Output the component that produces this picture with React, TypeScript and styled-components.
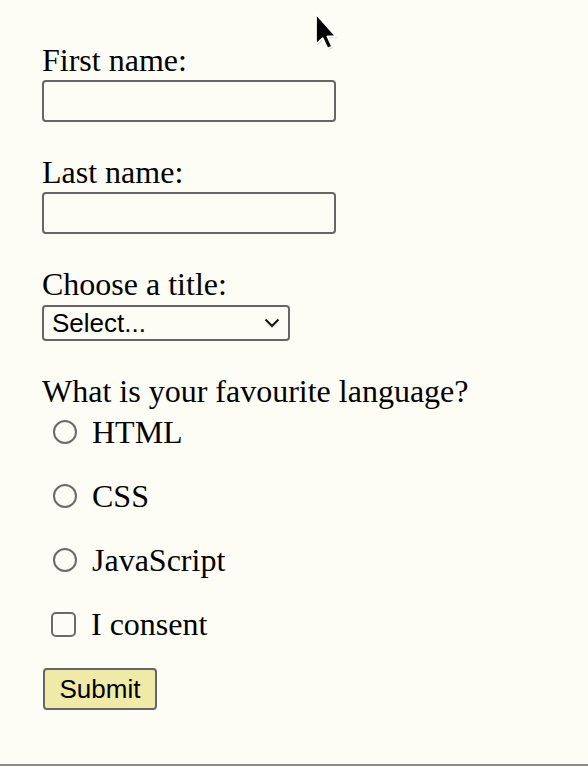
import React from "react";
import styled, { createGlobalStyle } from "styled-components";

const GlobalStyle = createGlobalStyle`
  html, body { margin: 0; padding: 0; }
  body { background: #fdfdf5; }
`;

const Page = styled.div`
  position: relative;
  box-sizing: border-box;
  height: 766px;
  padding: 42px 0 0 42px;
  border-bottom: 2px solid #8a8a8a;
  overflow: hidden;
`;

const Form = styled.form`
  display: flex;
  flex-direction: column;
  align-items: flex-start;
`;

const Field = styled.div<{ $gap?: number }>`
  display: flex;
  flex-direction: column;
  align-items: flex-start;
  gap: ${(p) => p.$gap ?? 2}px;
  margin-bottom: 32px;
`;

const Label = styled.label`
  display: block;
  font-family: "Liberation Serif", "Times New Roman", serif;
  font-size: 32px;
  line-height: 36px;
  color: #000;
`;

const TextInput = styled.input`
  box-sizing: border-box;
  width: 294px;
  height: 42px;
  border: 2px solid #666;
  border-radius: 4px;
  background: transparent;
  margin: 0;
  padding: 0 8px;
  font-size: 24px;
`;

const SelectWrap = styled.div`
  position: relative;
  width: 248px;
  height: 36px;
`;

const Select = styled.select`
  appearance: none;
  -webkit-appearance: none;
  box-sizing: border-box;
  width: 100%;
  height: 100%;
  margin: 0;
  border: 2px solid #666;
  border-radius: 4px;
  background: transparent;
  padding: 0 0 0 8px;
  font-family: "Liberation Sans", Arial, sans-serif;
  font-size: 26px;
  color: #000;
`;

const Chevron = styled.svg`
  position: absolute;
  right: 10px;
  top: 13px;
  pointer-events: none;
`;

const OptionList = styled.div`
  display: flex;
  flex-direction: column;
  gap: 28px;
  margin-top: 5px;
`;

const Row = styled.label<{ $indent: number }>`
  display: flex;
  align-items: center;
  gap: 15px;
  padding-left: ${(p) => p.$indent}px;
  font-family: "Liberation Serif", "Times New Roman", serif;
  font-size: 32px;
  line-height: 36px;
  color: #000;
`;

const Radio = styled.input.attrs({ type: "radio" })`
  appearance: none;
  -webkit-appearance: none;
  box-sizing: border-box;
  width: 24px;
  height: 24px;
  margin: 0;
  border: 2px solid #6a6a6a;
  border-radius: 50%;
  background: transparent;
`;

const Checkbox = styled.input.attrs({ type: "checkbox" })`
  appearance: none;
  -webkit-appearance: none;
  box-sizing: border-box;
  width: 25px;
  height: 25px;
  margin: 0;
  border: 2px solid #6a6a6a;
  border-radius: 5px;
  background: transparent;
`;

const SubmitButton = styled.button`
  box-sizing: border-box;
  margin-top: 26px;
  margin-left: 1px;
  width: 114px;
  height: 42px;
  border: 2px solid #666;
  border-radius: 4px;
  background: #f0eaa8;
  font-family: "Liberation Sans", Arial, sans-serif;
  font-size: 26px;
  color: #000;
  padding: 0;
`;

const Cursor = styled.svg`
  position: absolute;
  left: 311px;
  top: 11px;
`;

export default function App() {
  return (
    <>
      <GlobalStyle />
      <Page>
        <Form onSubmit={(e) => e.preventDefault()}>
          <Field>
            <Label htmlFor="fname">First name:</Label>
            <TextInput id="fname" type="text" />
          </Field>
          <Field>
            <Label htmlFor="lname">Last name:</Label>
            <TextInput id="lname" type="text" />
          </Field>
          <Field $gap={3}>
            <Label htmlFor="title">Choose a title:</Label>
            <SelectWrap>
              <Select id="title" defaultValue="">
                <option value="">Select...</option>
                <option value="mr">Mr</option>
                <option value="ms">Ms</option>
              </Select>
              <Chevron width="16" height="10" viewBox="0 0 16 10">
                <path d="M1.5 1.5 L8 8 L14.5 1.5" fill="none" stroke="#111" strokeWidth="2" />
              </Chevron>
            </SelectWrap>
          </Field>
          <Label as="div">What is your favourite language?</Label>
          <OptionList>
            <Row $indent={11}>
              <Radio name="lang" value="html" />
              HTML
            </Row>
            <Row $indent={11}>
              <Radio name="lang" value="css" />
              CSS
            </Row>
            <Row $indent={11}>
              <Radio name="lang" value="js" />
              JavaScript
            </Row>
            <Row $indent={9}>
              <Checkbox name="consent" />I consent
            </Row>
          </OptionList>
          <SubmitButton type="submit">Submit</SubmitButton>
        </Form>
        <Cursor width="30" height="42" viewBox="0 0 26 38">
          <path
            d="M5 4 L5 31 L11 25.5 L15.5 35 L19.5 33.2 L15.2 24 L23 24 Z"
            fill="#999"
            opacity="0.5"
          />
          <path
            d="M4 3 L4 30 L10 24.5 L14.5 34 L18.5 32.2 L14.2 23 L22 23 Z"
            fill="#000"
            stroke="#fff"
            strokeWidth="1.5"
            strokeLinejoin="round"
          />
        </Cursor>
      </Page>
    </>
  );
}
